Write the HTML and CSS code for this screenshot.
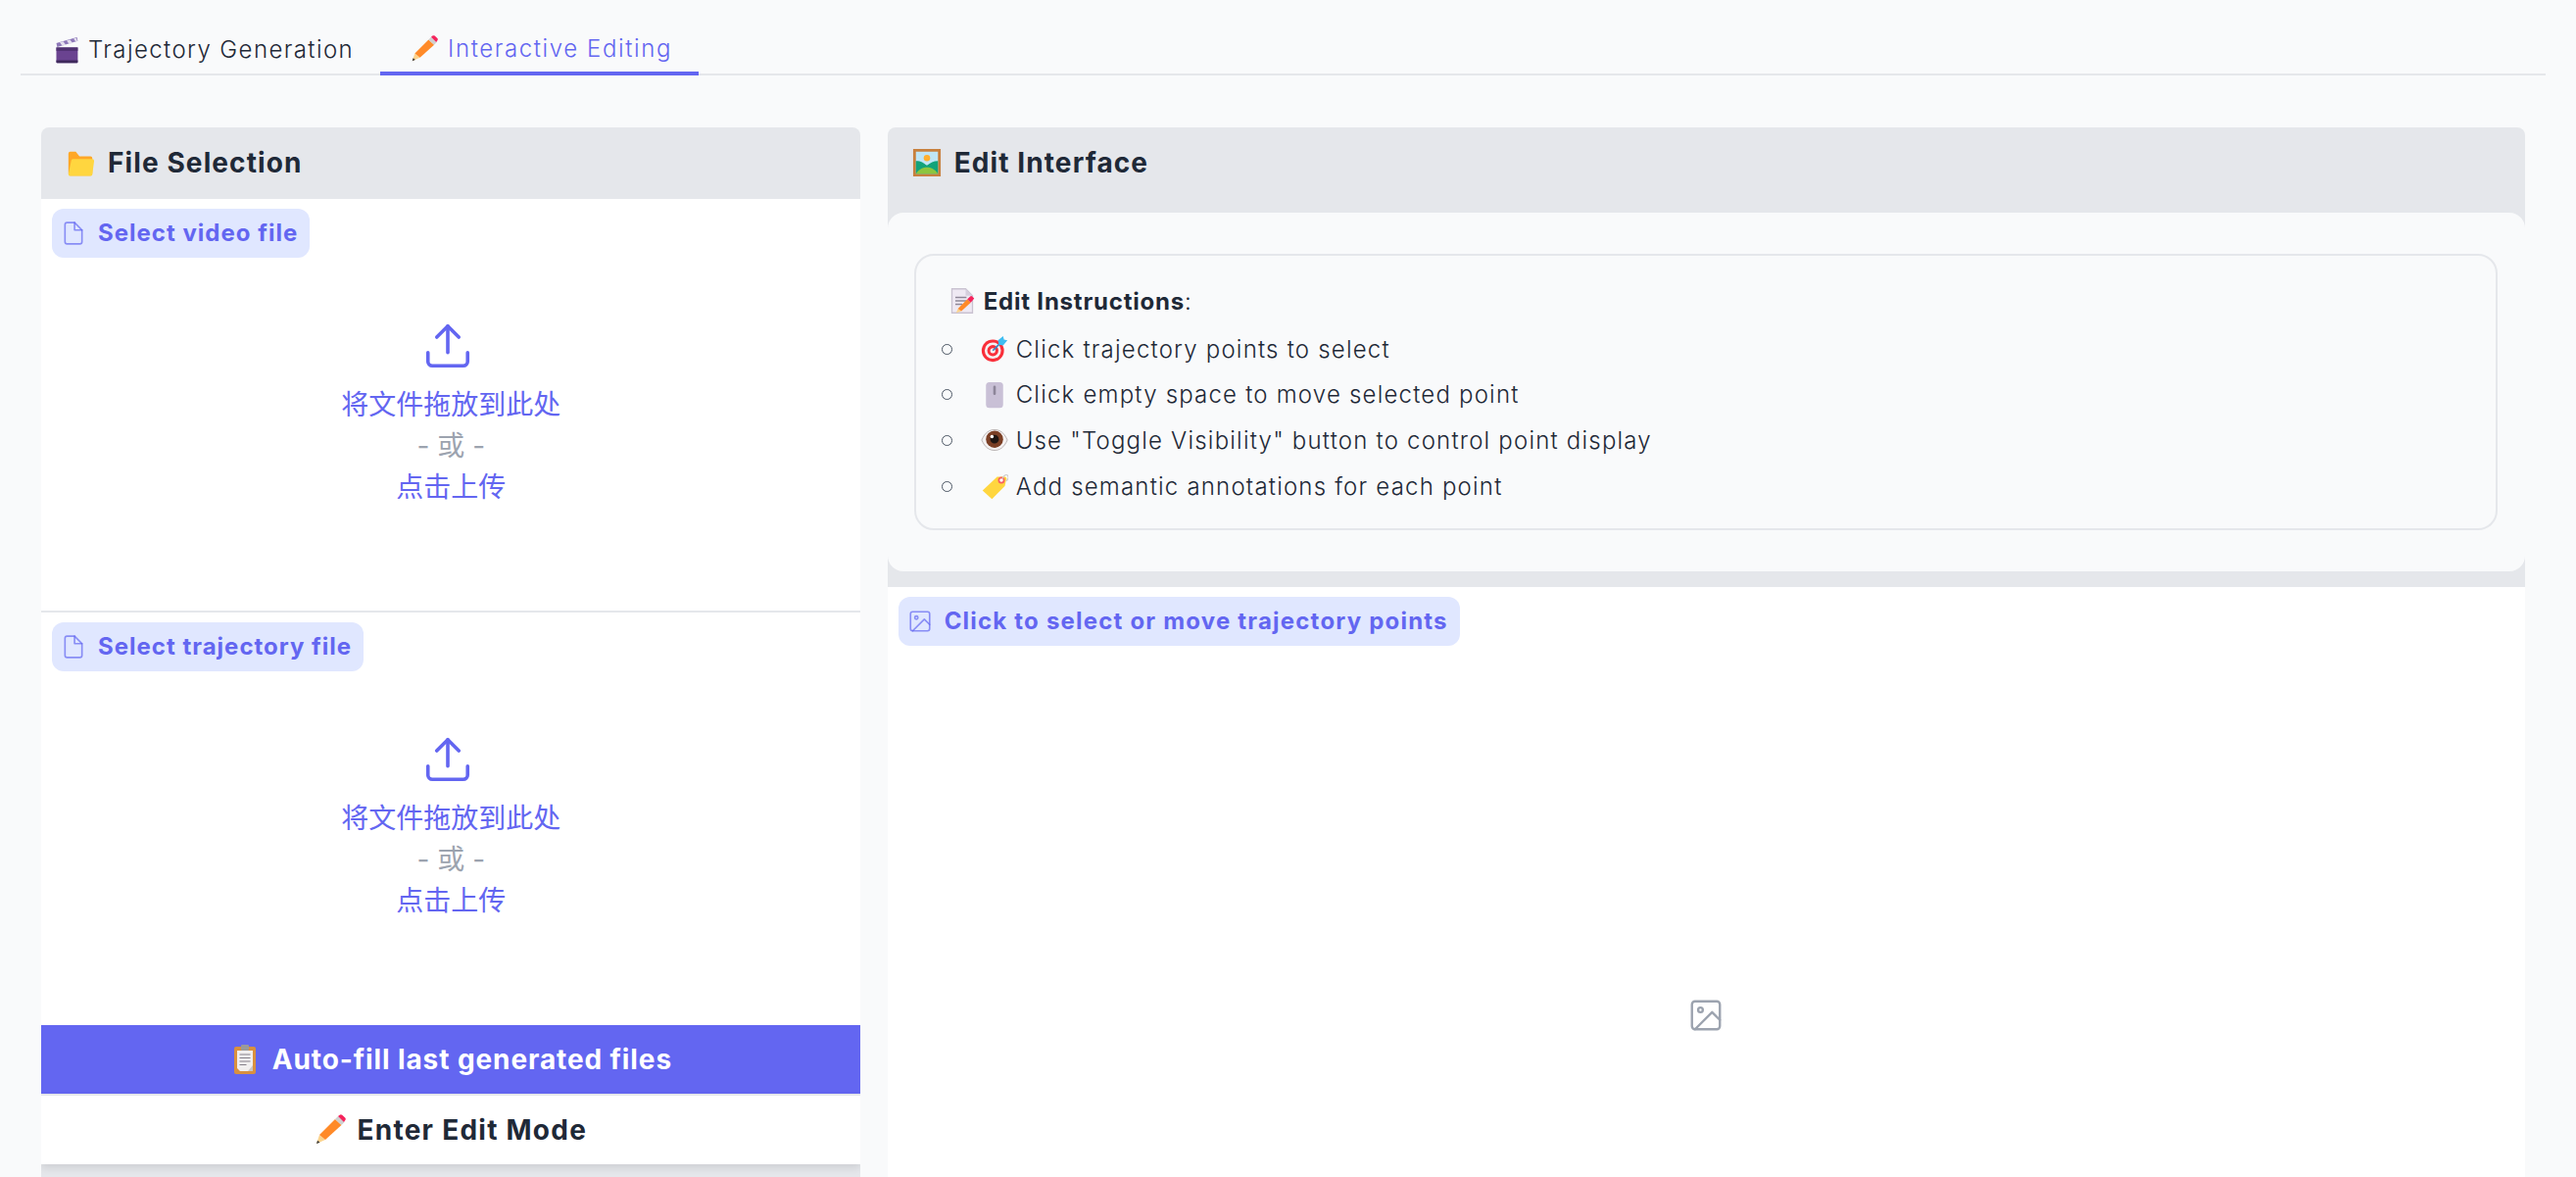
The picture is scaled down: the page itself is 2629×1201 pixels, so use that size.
FILE: index.html
```html
<!DOCTYPE html>
<html lang="en">
<head>
    <meta charset="UTF-8">
    <meta name="viewport" content="width=device-width, initial-scale=1.0">
    <title>Trajectory Editor</title>
    <link rel="stylesheet" href="styles.css">
</head>
<body>
    <svg class="sprites" width="0" height="0">
        <symbol id="e-clapper" viewBox="0 0 32 32">
            <path d="M4 8l24-7 1 4.500-24 7z" fill="#8d77b8"/>
            <path d="M8 7l4-1 3 4-4 1zM16 5l4-1 3 4-4 1zM24 2.800l3-.8 1.500 3.500-2 .6z" fill="#e4e0ee"/>
            <path d="M4 13h25v17a1 1 0 0 1-1 1H5a1 1 0 0 1-1-1z" fill="#6a4390"/>
            <path d="M4 13h25v4H4z" fill="#4f3270"/>
            <path d="M4 28h25v2a1 1 0 0 1-1 1H5a1 1 0 0 1-1-1z" fill="#3f2a5c"/>
        </symbol>
        <symbol id="e-pencil" viewBox="0 0 32 32">
            <path d="M2 30l3-9 6 5z" fill="#fbd38d"/>
            <path d="M2 30l1-3.300 2.500 2z" fill="#3a3a3a"/>
            <path d="M5 21L21 5l6.500 6L11 26z" fill="#ff8a28"/>
            <path d="M21 5l3-3 6.500 6-3 3z" fill="#cfcfcf"/>
            <path d="M24 2l1.600-1.300a2 2 0 0 1 2.600 0l3 2.800a2 2 0 0 1 0 2.700L30 8z" fill="#f5245c"/>
        </symbol>
        <symbol id="e-folder" viewBox="0 0 32 32">
            <path d="M3 6a2 2 0 0 1 2-2h6l4 5h12a2 2 0 0 1 2 2v17a2 2 0 0 1-2 2H5a2 2 0 0 1-2-2z" fill="#ffa726"/>
            <path d="M6 14a2 2 0 0 1 2-2h21a2 2 0 0 1 2 2l-2 15a2 2 0 0 1-2 1.500H5a2 2 0 0 1-2-2z" fill="#ffd63f"/>
        </symbol>
        <symbol id="e-picture" viewBox="0 0 32 32">
            <path d="M1 1h30v30H1z" fill="#c8803d"/>
            <path d="M4 4h24v24H4z" fill="#bfe6f6"/>
            <circle cx="16" cy="11" r="3.500" fill="#ffb02e"/>
            <path d="M4 14c6 0 8 2 12 5 4-3 7-5 12-5v14H4z" fill="#12a37a"/>
            <path d="M4 28c3-5 8-7 12-7s9 2 12 7z" fill="#8cc63f"/>
        </symbol>
        <symbol id="e-memo" viewBox="0 0 32 32">
            <path d="M4 2h16l8 8v20H4z" fill="#efe9f3" stroke="#c9c2d1" stroke-width="1.500"/>
            <path d="M20 2l8 8h-8z" fill="#d5cedd"/>
            <path d="M8 12h13M8 16h13M8 20h8" stroke="#8f8898" stroke-width="1.500"/>
            <path d="M9 30l2-5 4 3z" fill="#fbd38d"/>
            <path d="M11 25l11-11 4 4-11 10z" fill="#ff8a28"/>
            <path d="M22 14l3-3a2 2 0 0 1 3 0l2 2-4 5z" fill="#f5245c"/>
        </symbol>
        <symbol id="e-target" viewBox="0 0 32 32">
            <circle cx="14" cy="18" r="13" fill="#f92f3a"/>
            <circle cx="14" cy="18" r="9.500" fill="#f6f0f2"/>
            <circle cx="14" cy="18" r="6.500" fill="#f92f3a"/>
            <circle cx="14" cy="18" r="3" fill="#f6f0f2"/>
            <path d="M14 18L26 6" stroke="#3b88c3" stroke-width="2"/>
            <path d="M20 6l6-5 1 4 4 1-5 6-5-1z" fill="#3fbdf1"/>
        </symbol>
        <symbol id="e-mouse" viewBox="0 0 32 32">
            <rect x="6" y="1" width="20" height="30" rx="4" fill="#c9c0d6"/>
            <rect x="14.500" y="5" width="3" height="11" rx="1.500" fill="#8d8599"/>
        </symbol>
        <symbol id="e-eye" viewBox="0 0 32 32">
            <path d="M1 16C5 7 10 4 16 4s11 3 15 12c-4 9-9 12-15 12S5 25 1 16z" fill="#f4f1f1" stroke="#b5aeae"/>
            <circle cx="16" cy="15" r="10" fill="#7b3f25"/>
            <circle cx="16" cy="15" r="5" fill="#1f1512"/>
            <circle cx="13" cy="12" r="2" fill="#fff"/>
        </symbol>
        <symbol id="e-label" viewBox="0 0 32 32">
            <path d="M2 21L19 5h9a2 2 0 0 1 2 2l-2 9-15 15z" fill="#ffd63f"/>
            <circle cx="24" cy="9" r="3" fill="#fff" stroke="#f8615f" stroke-width="2"/>
            <path d="M25 8c1-5 6-7 7-3 .5 2-1 4-2.500 5" fill="none" stroke="#ccc" stroke-width="1.300"/>
        </symbol>
        <symbol id="e-clipboard" viewBox="0 0 32 32">
            <rect x="5" y="3" width="22" height="28" rx="2" fill="#d9903f"/>
            <path d="M8 7h16v21h-13l-3-3z" fill="#f1efef"/>
            <path d="M19 28l5-6v6z" fill="#c9c6c6"/>
            <rect x="12" y="1" width="8" height="6" rx="1" fill="#9a9a9a"/>
            <path d="M10.500 11h11M10.500 14.500h11M10.500 18h11M10.500 21.500h7" stroke="#85808a" stroke-width="1.200"/>
        </symbol>
        <symbol id="i-file" viewBox="0 0 24 24">
            <path d="M13 2H6a2 2 0 0 0-2 2v16a2 2 0 0 0 2 2h12a2 2 0 0 0 2-2V9z"/>
            <path d="M13 2v7h7"/>
        </symbol>
        <symbol id="i-image" viewBox="0 0 24 24">
            <rect x="3" y="3" width="18" height="18" rx="2"/>
            <circle cx="8.500" cy="8.500" r="1.500"/>
            <path d="M21 15l-5-5L5 21"/>
        </symbol>
        <symbol id="i-upload" viewBox="0 0 24 24">
            <path d="M21 15v4a2 2 0 0 1-2 2H5a2 2 0 0 1-2-2v-4"/>
            <path d="M17 8l-5-5-5 5"/>
            <path d="M12 3v12"/>
        </symbol>
    </svg>

    <nav class="tabs">
        <button class="tab">
            <svg class="emoji"><use href="#e-clapper"/></svg>Trajectory Generation
        </button>
        <button class="tab active">
            <svg class="emoji"><use href="#e-pencil"/></svg>Interactive Editing
        </button>
    </nav>

    <main class="columns">
        <section class="panel">
            <h2 class="panel-title"><svg class="emoji"><use href="#e-folder"/></svg>File Selection</h2>

            <div class="dropzone">
                <span class="chip"><svg class="chip-icon"><use href="#i-file"/></svg>Select video file</span>
                <svg class="upload-icon"><use href="#i-upload"/></svg>
                <div class="drop-line">将文件拖放到此处</div>
                <div class="drop-line muted">- 或 -</div>
                <div class="drop-line">点击上传</div>
            </div>

            <div class="dropzone">
                <span class="chip"><svg class="chip-icon"><use href="#i-file"/></svg>Select trajectory file</span>
                <svg class="upload-icon"><use href="#i-upload"/></svg>
                <div class="drop-line">将文件拖放到此处</div>
                <div class="drop-line muted">- 或 -</div>
                <div class="drop-line">点击上传</div>
            </div>

            <button class="btn primary"><svg class="emoji"><use href="#e-clipboard"/></svg>Auto-fill last generated files</button>
            <button class="btn secondary"><svg class="emoji"><use href="#e-pencil"/></svg>Enter Edit Mode</button>
        </section>

        <section class="panel">
            <h2 class="panel-title wide"><svg class="emoji"><use href="#e-picture"/></svg>Edit Interface</h2>

            <div class="notes">
                <div class="notes-box">
                    <p class="notes-head"><svg class="emoji"><use href="#e-memo"/></svg><span><strong>Edit Instructions</strong>:</span></p>
                    <ul class="notes-list">
                        <li><svg class="emoji"><use href="#e-target"/></svg>Click trajectory points to select</li>
                        <li><svg class="emoji"><use href="#e-mouse"/></svg>Click empty space to move selected point</li>
                        <li><svg class="emoji"><use href="#e-eye"/></svg>Use "Toggle Visibility" button to control point display</li>
                        <li><svg class="emoji"><use href="#e-label"/></svg>Add semantic annotations for each point</li>
                    </ul>
                </div>
            </div>

            <div class="canvas">
                <span class="chip"><svg class="chip-icon"><use href="#i-image"/></svg>Click to select or move trajectory points</span>
                <svg class="canvas-icon"><use href="#i-image"/></svg>
            </div>
        </section>
    </main>
</body>
</html>
```

FILE: styles.css
```css
* {
    box-sizing: border-box;
}

html, body {
    height: 100%;
    overflow: hidden;
}

body {
    margin: 0;
    background: #f9fafb;
    color: #1f2937;
    font-family: Inter, "Noto Sans CJK SC", sans-serif;
}

.sprites {
    position: absolute;
}

.emoji {
    width: 28px;
    height: 28px;
    flex: none;
}

/* tabs */
.tabs {
    display: flex;
    height: 77px;
    margin: 0 31px 0 21px;
    padding-top: 26px;
    border-bottom: 2px solid #e5e7eb;
}

.tab {
    display: flex;
    align-items: center;
    gap: 8px;
    height: 51px;
    padding: 0 27px 0 33px;
    border: none;
    border-bottom: 2px solid transparent;
    background: none;
    color: #1f2937;
    font-family: inherit;
    font-size: 24px;
    font-weight: 300;
    letter-spacing: 1.4px;
}

.tab.active {
    gap: 10px;
    padding: 0 27px 0 31px;
    border-bottom: 4px solid #6366f1;
    color: #6366f1;
    letter-spacing: 1.6px;
}

/* columns */
.columns {
    display: grid;
    grid-template-columns: 1fr 2fr;
    gap: 28px;
    height: calc(100vh - 77px);
    padding: 53px 52px 0 42px;
}

.panel {
    display: flex;
    flex-direction: column;
    overflow: hidden;
    background: #e5e7eb;
    border-radius: 8px 8px 0 0;
}

.panel-title {
    display: flex;
    align-items: center;
    gap: 13px;
    height: 73px;
    flex: none;
    margin: 0;
    padding: 0 0 2px 25px;
    font-size: 28px;
    font-weight: 700;
    letter-spacing: 1.1px;
}

.panel-title .emoji {
    width: 30px;
    height: 30px;
}

.panel-title.wide {
    height: 87px;
    padding-bottom: 16px;
}

/* labels on top of upload boxes */
.chip {
    position: absolute;
    top: 10px;
    left: 11px;
    display: flex;
    align-items: center;
    gap: 12px;
    height: 50px;
    padding: 0 12px 0 9px;
    background: #e0e7ff;
    border-radius: 12px;
    color: #6366f1;
    font-size: 24px;
    font-weight: 700;
    letter-spacing: 1px;
    line-height: 48px;
}

.canvas .chip {
    letter-spacing: 1.2px;
}

.chip-icon {
    width: 26px;
    height: 26px;
    fill: none;
    stroke: #6366f1;
    stroke-opacity: 0.7;
    stroke-width: 1.5;
    stroke-linecap: round;
    stroke-linejoin: round;
}

/* upload */
.dropzone {
    position: relative;
    display: flex;
    flex-direction: column;
    align-items: center;
    height: 422px;
    padding-top: 130px;
    background: #fff;
    border-bottom: 2px solid #e5e7eb;
    color: #6366f1;
}

.dropzone + .dropzone {
    height: 421px;
    border-bottom: none;
}

.upload-icon {
    width: 54px;
    height: 54px;
    margin: -7px 0 12px -5px;
    fill: none;
    stroke: #6366f1;
    stroke-width: 1.6;
    stroke-linecap: round;
    stroke-linejoin: round;
}

.drop-line {
    padding-left: 1px;
    font-size: 28px;
    line-height: 42px;
}

.drop-line.muted {
    color: #9ca3af;
}

/* buttons */
.btn {
    display: flex;
    align-items: center;
    justify-content: center;
    gap: 12px;
    flex: none;
    height: 70px;
    border: none;
    font-family: inherit;
    font-size: 28px;
    font-weight: 700;
    letter-spacing: 0.9px;
}

.btn .emoji {
    width: 32px;
    height: 32px;
}

.btn.primary {
    background: #6366f1;
    color: #fff;
}

.btn.secondary {
    height: 72px;
    background: #fff;
    border-top: 2px solid #e5e7eb;
    color: #1f2937;
    letter-spacing: 1.25px;
    box-shadow: 0 4px 8px rgba(0, 0, 0, 0.1);
}

/* instructions */
.notes {
    flex: none;
    height: 366px;
    padding: 42px 28px 0 27px;
    background: #f9fafb;
    border-radius: 16px;
}

.notes-box {
    height: 282px;
    padding: 23px 0 0 33px;
    border: 2px solid #e5e7eb;
    border-radius: 20px;
    font-size: 24px;
    font-weight: 300;
    letter-spacing: 1.2px;
    color: #1f2937;
}

.notes-head {
    display: flex;
    align-items: center;
    gap: 8px;
    height: 46px;
    margin: 0;
}

.notes-head strong {
    font-weight: 700;
    letter-spacing: 0.8px;
}

.notes-list {
    margin: 3px 0 0;
    padding: 0;
    list-style: none;
}

.notes-list li {
    display: flex;
    align-items: center;
    gap: 8px;
    height: 46.6px;
    margin-left: -7px;
}

.notes-list li::before {
    content: "";
    width: 9px;
    height: 9px;
    margin-right: 21px;
    border: 1.5px solid #4b5563;
    border-radius: 50%;
}

/* image area */
.canvas {
    position: relative;
    display: flex;
    align-items: center;
    justify-content: center;
    height: 874px;
    flex: none;
    margin-top: 16px;
    background: #fff;
}

.canvas-icon {
    width: 38px;
    height: 38px;
    fill: none;
    stroke: #9ca3af;
    stroke-width: 1.5;
    stroke-linecap: round;
    stroke-linejoin: round;
}
```
